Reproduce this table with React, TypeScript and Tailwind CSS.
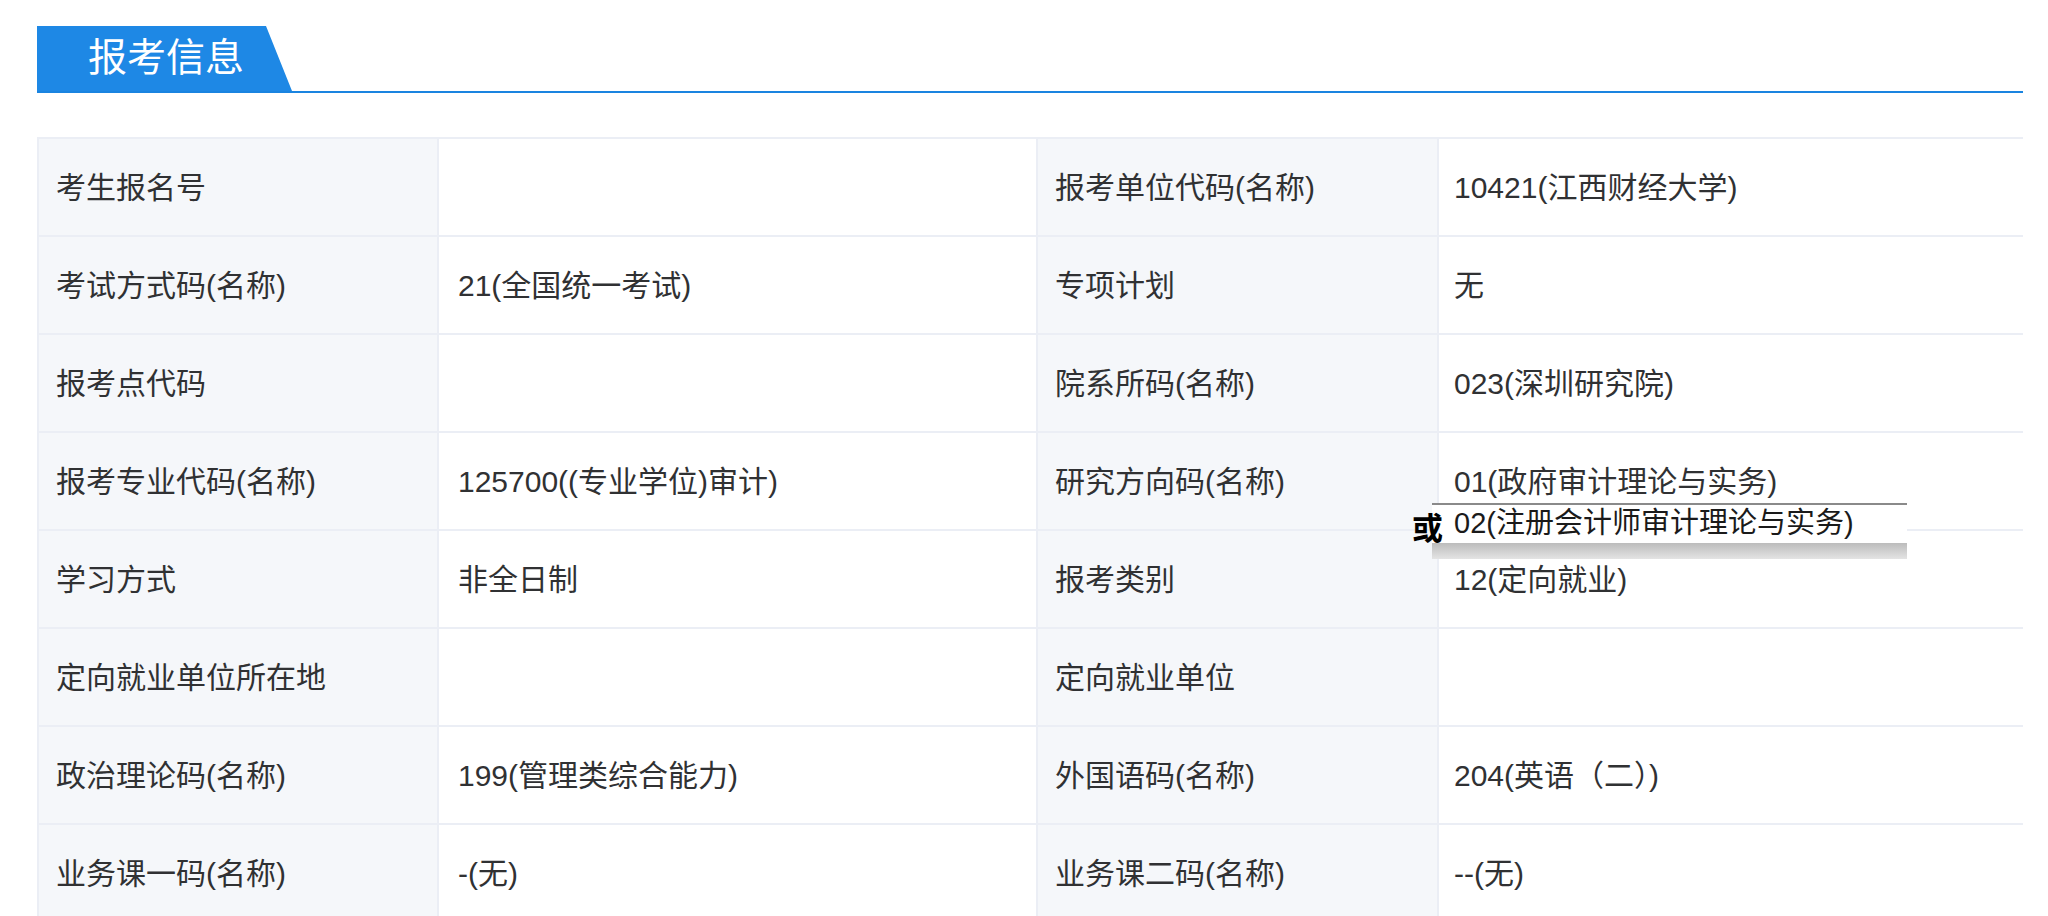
import React from "react";

type Row = [string, string, string, string];

const rows: Row[] = [
  ["考生报名号", "", "报考单位代码(名称)", "10421(江西财经大学)"],
  ["考试方式码(名称)", "21(全国统一考试)", "专项计划", "无"],
  ["报考点代码", "", "院系所码(名称)", "023(深圳研究院)"],
  ["报考专业代码(名称)", "125700((专业学位)审计)", "研究方向码(名称)", "01(政府审计理论与实务)"],
  ["学习方式", "非全日制", "报考类别", "12(定向就业)"],
  ["定向就业单位所在地", "", "定向就业单位", ""],
  ["政治理论码(名称)", "199(管理类综合能力)", "外国语码(名称)", "204(英语（二）)"],
  ["业务课一码(名称)", "-(无)", "业务课二码(名称)", "--(无)"],
];

export default function App() {
  return (
    <div
      className="relative h-[916px] w-[2048px] overflow-hidden bg-white pl-[37px] pt-[26px] text-[#303133]"
      style={{ fontFamily: '"Liberation Sans", "Noto Sans CJK SC", sans-serif' }}
    >
      {/* section title */}
      <div className="flex h-[67px] w-[1986px] border-b-2 border-[#1a84e0]">
        <div className="flex h-full w-[255px] items-center bg-[#1e88e5] pl-[51px] text-[39px] text-white [clip-path:polygon(0_0,229px_0,100%_100%,0_100%)]">
          报考信息
        </div>
      </div>

      {/* info table */}
      <div className="mt-[44px] w-[1986px] text-[30px]">
        {rows.map((row, i) => (
          <div
            key={i}
            className="grid h-[98px] grid-cols-[400px_599px_401px_586px] border-t-2 border-[#ebeef5]"
          >
            <div className="flex items-center border-l-2 border-[#ebeef5] bg-[#f5f7fa] pl-[17px]">
              {row[0]}
            </div>
            <div className="flex items-center border-l-2 border-[#ebeef5] bg-white pl-[19px]">
              {row[1]}
            </div>
            <div className="flex items-center border-l-2 border-[#ebeef5] bg-[#f5f7fa] pl-[17px]">
              {row[2]}
            </div>
            <div className="flex items-center border-l-2 border-[#ebeef5] bg-white pl-[15px]">
              {row[3]}
            </div>
          </div>
        ))}
      </div>

      {/* pasted alternative direction */}
      <div className="absolute left-[1432px] top-[503px] w-[475px]">
        <div className="relative flex h-[40px] items-center border-t-2 border-[#8a8a8a] bg-white pl-[22px] text-[29px] text-[#1a1a1a]">
          <span className="absolute left-[-20px] top-[8px] text-[31px] font-bold leading-none text-black">
            或
          </span>
          02(注册会计师审计理论与实务)
        </div>
        <div className="h-[16px] bg-gradient-to-b from-[#bcbcbc] to-[#e4e4e4]" />
      </div>
    </div>
  );
}
